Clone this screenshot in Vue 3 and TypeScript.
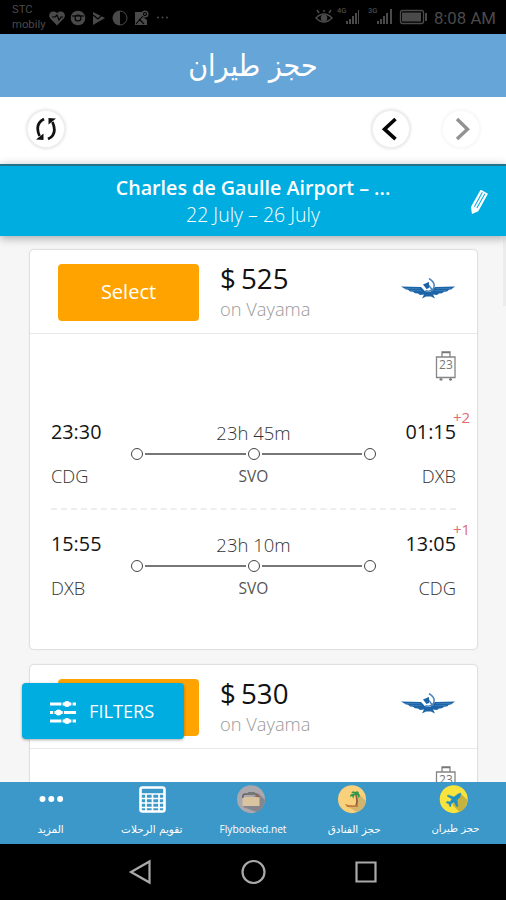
<script setup lang="ts">
interface Leg {
  depart: string
  from: string
  duration: string
  via: string
  arrive: string
  to: string
  plus: string
}
interface Offer {
  price: string
  seller: string
  legs: Leg[]
}

const offers: Offer[] = [
  {
    price: '$ 525',
    seller: 'on Vayama',
    legs: [
      { depart: '23:30', from: 'CDG', duration: '23h 45m', via: 'SVO', arrive: '01:15', to: 'DXB', plus: '+2' },
      { depart: '15:55', from: 'DXB', duration: '23h 10m', via: 'SVO', arrive: '13:05', to: 'CDG', plus: '+1' },
    ],
  },
  { price: '$ 530', seller: 'on Vayama', legs: [] },
]
const tabs = [
  { id: 'more', label: 'المزيد' },
  { id: 'calendar', label: 'تقويم الرحلات' },
  { id: 'site', label: 'Flybooked.net' },
  { id: 'hotels', label: 'حجز الفنادق' },
  { id: 'flights', label: 'حجز طيران' },
]
</script>

<template>
  <div class="screen">
    <div class="status">
      <div class="carrier"><span>STC</span><span>mobily</span></div>
      <svg class="status-left" width="122" height="18" viewBox="0 0 122 18">
        <g fill="#4a4a4a">
          <path d="M9 16.500L1.800 9C-.5 5 3.500-.2 9 4c5.500-4.200 9.500 1 7.200 5z" />
          <circle cx="30" cy="9" r="7.300" />
          <path d="M45 3l12 6-12 7z" />
          <path d="M72 1.500a7.500 7.500 0 1 0 0 15z" />
          <path d="M87 3h8v5l4 3v5H87z" />
          <circle cx="97" cy="5" r="3.500" />
          <circle cx="110" cy="8.500" r="1" /><circle cx="114.500" cy="8.500" r="1" /><circle cx="119" cy="8.500" r="1" />
        </g>
        <g fill="none" stroke="#000" stroke-width="1.100">
          <path d="M4 8h3l2-2 2 5 2-3h2" />
          <circle cx="30" cy="9" r="3" /><path d="M24 7h12" />
          <path d="M45 6l5 4 7-7" /><path d="M88 15l7-8M91 10l5 5" /><circle cx="97" cy="5" r="1.500" />
        </g>
        <path d="M72 2a7 7 0 0 1 0 14" fill="none" stroke="#4a4a4a" />
      </svg>
      <svg class="status-right" width="116" height="22" viewBox="0 0 116 22">
        <g fill="none" stroke="#4a4a4a" stroke-width="1.500">
          <path d="M1 14q8-8 16 0-8 8-16 0zM9 8V6M4 9L2 6M14 9l2-3" /><circle cx="9" cy="14" r="2.500" fill="#4a4a4a" />
        </g>
        <g fill="#4a4a4a">
          <path d="M31 17h2v3h-2zM34 15h2v5h-2zM37 12h2v8h-2zM40 9h2v11h-2zM43 6h1v14h-1zM62 17h2v3h-2zM65 15h2v5h-2zM68 12h2v8h-2zM71 9h2v11h-2zM75 5h2v15h-2z" />
          <rect x="87" y="8.500" width="19" height="9" /><path d="M110 9h2v8h-2z" />
        </g>
        <rect x="85.500" y="6.500" width="23" height="13" rx="2" fill="none" stroke="#4a4a4a" stroke-width="1.300" />
        <g class="net"><text x="22" y="9">4G</text><text x="53" y="9">3G</text></g>
      </svg>
      <span class="clock">8:08 AM</span>
    </div>

    <header class="title" dir="rtl"><h1>حجز طيران</h1></header>

    <div class="toolbar">
      <button class="round" aria-label="Refresh">
        <svg width="26" height="26" viewBox="0 0 26 26">
          <path d="M11 3C4 6.500 3.500 13 6.500 20M15 23C22.500 19.500 22.500 13 19.500 6" fill="none" stroke="#111" stroke-width="2.700" />
          <path d="M3 23.500l7.500.5v-6.500zM23 2.500L15.500 2v6.500z" fill="#111" />
        </svg>
      </button>
      <span class="grow"></span>
      <button class="round" aria-label="Back">
        <svg width="24" height="26" viewBox="0 0 24 26"><path d="M16.500 3L5.500 13.200l11 10" fill="none" stroke="#050505" stroke-width="3.600" /></svg>
      </button>
      <button class="round faint" aria-label="Forward">
        <svg width="24" height="26" viewBox="0 0 24 26"><path d="M8 3l10.500 10.200L8 23" fill="none" stroke="#929292" stroke-width="3.400" /></svg>
      </button>
    </div>

    <section class="trip">
      <strong>Charles de Gaulle Airport – ...</strong>
      <span>22 July – 26 July</span>
      <svg class="pencil" width="20" height="26" viewBox="0 0 20 26">
        <g transform="rotate(29 10 13)"><path d="M5.800 0h8.400v20L10 25.500 5.800 20z" fill="#fff" /><path d="M8.600 1.500V18M11.500 1.500V18" stroke="#00ade0" stroke-width="1" /></g>
      </svg>
    </section>

    <main class="results">
      <article v-for="offer in offers" :key="offer.price" class="card">
        <div class="offer">
          <button class="select"><span v-if="offer.legs.length">Select</span></button>
          <div class="cost"><b>{{ offer.price }}</b><span>{{ offer.seller }}</span></div>
          <svg class="airline" width="56" height="22" viewBox="0 0 56 22">
            <path d="M1 8.500l20 .5 3 3 4 2 4-2 3-3 20-.5-4 3-2 .2-2 1.800-3 .2-2 1.600-3 .2-2 1.500-4-.5 2 4-4-2h-5l-4 2 2-4-4 .5-2-1.500-3-.2-2-1.600-3-.2-2-1.800-2-.2z" fill="#1b64a8" />
            <path d="M5 10.500h15M10 12.500h11M36 10.500h15M35 12.500h11" stroke="#558fc0" stroke-width=".5" />
            <circle cx="28.500" cy="8" r="6" fill="#fff" />
            <path d="M29 .5q7 4 4.500 10-3.500 4-8 2M27 5l6 8" fill="none" stroke="#4c86bb" stroke-width="1.500" />
            <path d="M23 6.500l6-2.500v6l-2.500 1z" fill="#1b64a8" />
          </svg>
        </div>
        <div class="baggage">
          <svg width="22" height="32" viewBox="0 0 22 32">
            <path d="M1.500 7h18.500v20.500H1.500zM7 7V2h8v5M6 28v2.500M15.500 28v2.500" fill="none" stroke="#858585" stroke-width="1.300" />
            <path d="M4.500 29.500h3M14 29.500h3M7 2.500h8" stroke="#777" stroke-width="1.500" />
            <text x="10.900" y="19" text-anchor="middle">23</text>
          </svg>
        </div>
        <div v-for="leg in offer.legs" :key="leg.depart" class="leg">
          <div class="end"><time>{{ leg.depart }}</time><span>{{ leg.from }}</span></div>
          <div class="route">
            <span class="duration">{{ leg.duration }}</span>
            <div class="track"><i></i><hr /><i></i><hr /><i></i></div>
            <span class="via">{{ leg.via }}</span>
          </div>
          <div class="end arrive"><time>{{ leg.arrive }}</time><span>{{ leg.to }}</span><sup>{{ leg.plus }}</sup></div>
        </div>
      </article>
      <div class="scroll"></div>
      <button class="filters">
        <svg width="28" height="24" viewBox="0 0 28 24">
          <path d="M1 3h26M1 11.500h26M1 20h26" stroke="#fff" stroke-width="2.800" />
          <path d="M13 0v6M23 0v6M13 17v6M23 17v6M4.800 8v7M14.300 8v7" stroke="#00ade0" stroke-width="1.200" />
          <g fill="#fff"><circle cx="18" cy="3" r="3" /><circle cx="9.500" cy="11.500" r="3" /><circle cx="18" cy="20" r="3" /></g>
        </svg>
        <span>FILTERS</span>
      </button>
    </main>

    <nav class="tabs">
      <div v-for="tab in tabs" :key="tab.id" class="tab" :class="tab.id">
        <svg width="30" height="30" viewBox="0 0 30 30">
          <g v-if="tab.id === 'more'" fill="#fff"><circle cx="6.500" cy="14" r="3" /><circle cx="15.300" cy="14" r="3" /><circle cx="24.100" cy="14" r="3" /></g>
          <g v-else-if="tab.id === 'calendar'">
            <rect x="3.500" y="2.500" width="24" height="24" rx="2" fill="#3b98c9" stroke="#fff" stroke-width="2.600" />
            <path d="M4 9h23M4 13.500h23M4 18h23M4 22.500h23M9 9v17M15.500 9v17M22 9v17" stroke="#fff" stroke-width="1.700" />
          </g>
          <g v-else-if="tab.id === 'site'">
            <circle cx="13" cy="14.200" r="14" fill="#aaa8ad" /><path d="M20 8l7 7q-1 9-8 12l-14-5z" fill="#85858f" />
            <path d="M4.500 12h17v9h-17z" fill="#d8c59f" /><path d="M5 13q-1-4 3-4h10l3 3" fill="none" stroke="#66626b" stroke-width="1.600" /><path d="M10 7h7v3h-7z" fill="#777" /><circle cx="19" cy="11" r="1.300" fill="#a46543" />
          </g>
          <g v-else-if="tab.id === 'hotels'">
            <circle cx="13" cy="14.200" r="14" fill="#f8d17a" /><path d="M20 9l7 7q-1 8-9 11l-9-5 9-2z" fill="#d3b46d" />
            <path d="M17 10q2 6 0 11" fill="none" stroke="#895b37" stroke-width="1.700" /><path d="M11 12q0-4 5-3-4-2-4 0 1-4 4-2 4-2 4 2 2 1-.5 4-1-4-3-3-2 0-2 4l-1.500-3z" fill="#31964b" /><path d="M6 19q5 2 13 1v2H8z" fill="#c77c40" />
          </g>
          <g v-else>
            <circle cx="13.700" cy="14.200" r="14" fill="#f9e33d" /><path d="M20 8l7.500 7q-1 9-8 12l-7-7z" fill="#c6b33e" />
            <path d="M21 8l-3 1-4 3-6-2-1 1 5 3-2 3-3-.5-1 1 3 1.500 1 3 1-1v-2l3-2 3 5 1-1-1-6 3-3z" fill="#208fc2" stroke="#208fc2" stroke-width=".5" />
          </g>
        </svg>
        <span :dir="tab.id === 'site' ? 'ltr' : 'rtl'">{{ tab.label }}</span>
      </div>
    </nav>

    <footer class="system">
      <svg width="24" height="26" viewBox="0 0 24 26"><path d="M21.500 2.500v21L3 13z" /></svg>
      <svg width="26" height="26" viewBox="0 0 26 26"><circle cx="13.500" cy="13" r="11" /></svg>
      <svg width="24" height="24" viewBox="0 0 24 24"><path d="M2.500 2.500h19v19h-19z" /></svg>
    </footer>
  </div>
</template>

<style>
body { margin: 0; background: #000; }
</style>
<style scoped>
* { box-sizing: border-box; }
.screen { width: 506px; height: 900px; display: flex; flex-direction: column; overflow: hidden; background: #f6f6f6; font-family: "Open Sans", sans-serif; color: #222; }
button { font: inherit; border: 0; padding: 0; }
svg { display: block; flex: none; }
.status { flex: 0 0 34px; display: flex; align-items: flex-start; background: #000; color: #4a4a4a; padding: 2px 10px 0 12px; font-family: Roboto, sans-serif; }
.carrier { width: 35px; display: flex; flex-direction: column; font-size: 11.300px; line-height: 15px; }
.status-left { margin: 7px 0 0 1px; }
.status-right { margin: 2px 3px 0 145px; }
.net text { font: 500 7.500px Roboto, sans-serif; fill: #4a4a4a; }
.clock { font-size: 16.800px; line-height: 20px; margin-top: 6px; white-space: nowrap; }
.title { flex: 0 0 63px; background: #65a5d7; display: flex; justify-content: center; align-items: center; }
h1 { margin: 0; color: #fff; font: 400 30px/40px "DejaVu Sans Condensed", "DejaVu Sans", sans-serif; font-stretch: condensed; white-space: nowrap; }
.toolbar { flex: 0 0 67px; background: #fff; display: flex; align-items: center; padding: 0 26px; }
.grow { flex: 1; }
.round { width: 38px; height: 38px; border-radius: 50%; background: #fff; border: 1px solid #f0f0f0; box-shadow: 0 0 3px 1px #e4e4e4; display: flex; align-items: center; justify-content: center; margin: -3px 0 0 1px; }
.round + .round { margin-left: 32px; }
.faint { border-color: #fafafa; box-shadow: 0 0 3px 1px #f6f6f6; }
.trip { position: relative; z-index: 2; flex: 0 0 72px; border-top: 2px solid #25718a; background: #00ade0; box-shadow: 0 2px 9px #0005; display: flex; flex-direction: column; align-items: center; padding-top: 8px; color: #fff; white-space: nowrap; }
.trip strong { font-size: 19.700px; line-height: 27px; font-weight: 600; }
.trip span { font-size: 19.500px; line-height: 27px; font-weight: 300; }
.pencil { position: absolute; right: 18px; top: 24px; }
.results { position: relative; flex: 1; min-height: 0; overflow: hidden; padding: 13px 28px 0 29px; display: flex; flex-direction: column; gap: 14px; }
.card { flex: 0 0 401px; background: #fff; border: 1px solid #e0e0e0; border-radius: 5px; box-shadow: 0 0 2px #0001; }
.offer { height: 84px; border-bottom: 1px solid #e9e9e9; display: flex; padding: 14px 21px 0 28px; }
.select { width: 141px; height: 57px; background: #ffa300; color: #fff; border-radius: 4px; font-size: 20px; line-height: 54px; padding-bottom: 2px; }
.cost { margin-left: 21px; flex: 1; display: flex; flex-direction: column; white-space: nowrap; }
.cost b { font-weight: 500; font-size: 27.700px; line-height: 30px; color: #111; word-spacing: -2px; margin-top: -1px; }
.cost span { font-size: 18.300px; line-height: 29px; font-weight: 300; color: #999; margin-top: 1px; }
.airline { margin-top: 14px; }
.baggage { height: 64px; display: flex; justify-content: flex-end; padding: 16px 20px 0 0; }
.baggage text { font: 400 12px "Open Sans", sans-serif; fill: #777; }
.leg { height: 113px; margin: 0 21px; display: flex; justify-content: space-between; padding-top: 20px; }
.leg:not(:last-child) { height: 112px; border-bottom: 2px dashed #eee; }
.end { position: relative; width: 80px; display: flex; flex-direction: column; white-space: nowrap; }
.end time { font-size: 19.800px; line-height: 28px; font-weight: 500; color: #151515; }
.end span { margin-top: 16px; font-size: 18.300px; line-height: 28px; font-weight: 300; color: #333; }
.arrive { align-items: flex-end; }
sup { position: absolute; left: 77px; top: -10px; font-size: 15px; line-height: 18px; color: #e36a70; font-weight: 400; }
.route { width: 245px; display: flex; flex-direction: column; align-items: center; }
.duration { font-size: 18.500px; line-height: 30px; font-weight: 300; color: #333; }
.track { width: 100%; height: 14px; display: flex; align-items: center; margin-top: -1px; }
.track i { width: 12px; height: 12px; border: 1.500px solid #444; border-radius: 50%; flex: none; }
.track hr { flex: 1; border: 0; height: 1.500px; background: #777; margin: 0 2px; }
.via { font-size: 15.500px; line-height: 30px; font-weight: 400; color: #555; }
.scroll { position: absolute; right: 0; top: 0; width: 3px; height: 70px; background: #ececec; }
.filters { position: absolute; left: 22px; top: 447px; width: 162px; height: 56px; border-radius: 4px; background: #00ade0; color: #fff; display: flex; align-items: center; padding: 0 0 0 27px; gap: 12px; font-size: 18.200px; box-shadow: 0 1px 3px #0005; }
.filters svg { margin-top: 3px; }
.tabs { flex: 0 0 62px; background: #3b98c9; display: grid; grid-template-columns: repeat(5, 1fr); }
.tab { display: flex; flex-direction: column; align-items: center; padding-top: 3px; color: #fff; white-space: nowrap; }
.tab svg { overflow: visible; }
.tab span { font: 10.500px/18px "DejaVu Sans", sans-serif; margin-top: 5px; }
.tab.flights span { font-size: 10px; }
.tab.site span { font: 500 10.200px/18px "Open Sans", sans-serif; }
.system { flex: 0 0 56px; background: #000; display: flex; justify-content: center; align-items: center; gap: 88px; }
.system svg { fill: none; stroke: #aaa; stroke-width: 2.200; }
</style>
